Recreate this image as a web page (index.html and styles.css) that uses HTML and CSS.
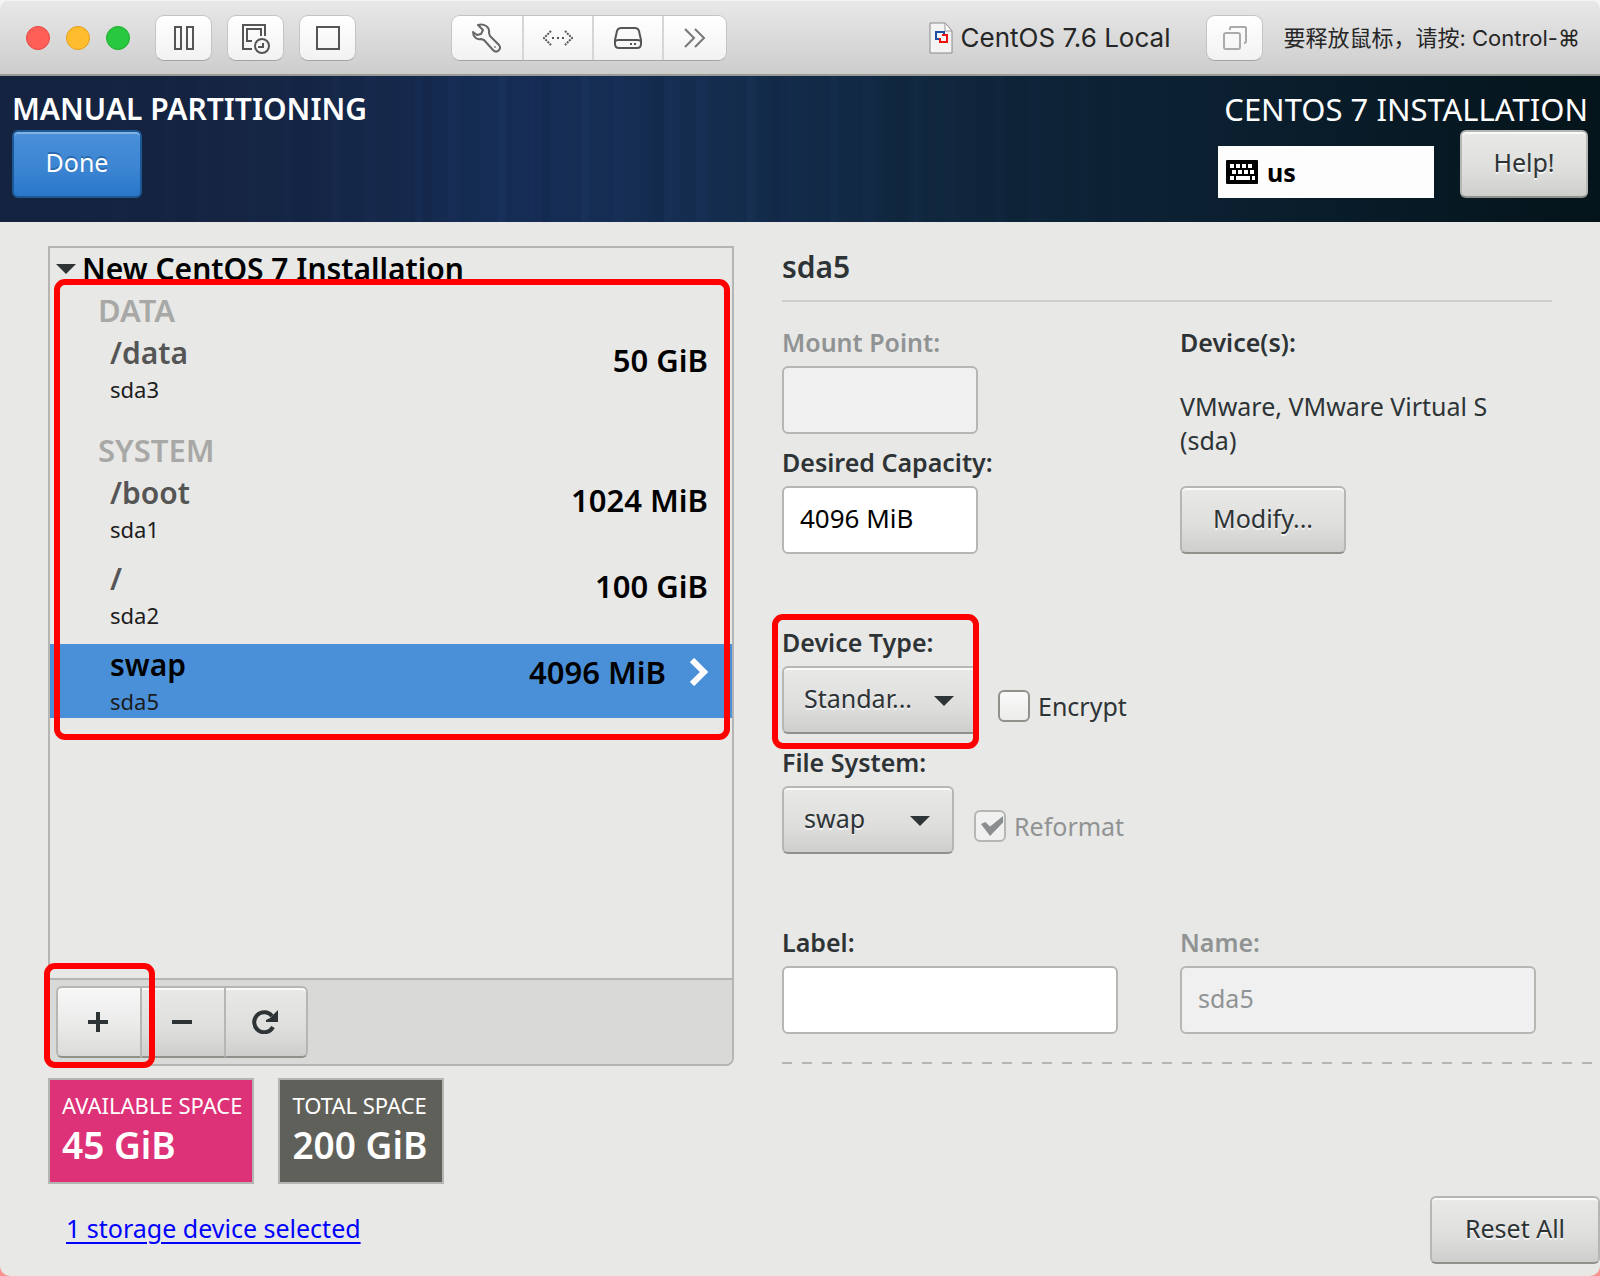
FILE: index.html
```html
<!DOCTYPE html>
<html lang="en">
<head>
<meta charset="utf-8">
<title>CentOS 7.6 Local</title>
<link rel="stylesheet" href="styles.css">
</head>
<body>
<div class="window">
  <div class="titlebar">
    <div class="lights">
      <span class="light light-close"></span>
      <span class="light light-min"></span>
      <span class="light light-max"></span>
    </div>
    <div class="tools">
      <button class="tool" aria-label="Pause">
        <svg width="22" height="26" viewBox="0 0 22 26" fill="none" stroke="#555" stroke-width="2"><path d="M2 2h6v22H2zM14 2h6v22h-6z"/></svg>
      </button>
      <button class="tool" aria-label="Snapshots">
        <svg width="30" height="32" viewBox="0 0 30 32" fill="none" stroke="#555" stroke-width="2"><path d="M11 27H2V3h22v11"/><path d="M11 19H6V7h14v7"/><circle cx="21" cy="24" r="7"/><path d="M17 25h5v-4"/></svg>
      </button>
      <button class="tool" aria-label="Full screen">
        <svg width="26" height="26" viewBox="0 0 26 26" fill="none" stroke="#555" stroke-width="2"><path d="M2 2h22v22H2z"/></svg>
      </button>
    </div>
    <div class="tool-group">
      <button class="seg" aria-label="Settings">
        <svg width="30" height="30" viewBox="0 0 30 30" fill="none" stroke="#666" stroke-width="2" stroke-linejoin="round"><path d="M6 2c6-2 12 2 11 8l1 3 9 9c3 4-2 9-6 5l-9-10-3-1C5 17 1 14 1 9l4 3 4-1 2-4z"/><circle cx="23" cy="24" r="1" fill="#888" stroke="none"/></svg>
      </button>
      <button class="seg" aria-label="Network">
        <svg width="30" height="16" viewBox="0 0 30 16" fill="none" stroke="#555" stroke-width="2" stroke-dasharray="2 1"><path d="M8 1L1 8l7 7M22 1l7 7-7 7"/><path d="M9 8h2M14 8h2M19 8h2" stroke-dasharray="none"/></svg>
      </button>
      <button class="seg" aria-label="Hard disk">
        <svg width="30" height="24" viewBox="0 0 30 24" fill="none" stroke="#555" stroke-width="2" stroke-linejoin="round"><path d="M8 2h14q3 0 4 3l2 9v4q0 4-4 4H6q-4 0-4-4v-4l2-9q1-3 4-3z"/><path d="M2 16q0-2 4-2h18q4 0 4 2M17 18h2M21 18h2"/></svg>
      </button>
      <button class="seg" aria-label="More">
        <svg width="22" height="20" viewBox="0 0 22 20" fill="none" stroke="#777" stroke-width="2"><path d="M1 1l9 9-9 9M11 1l9 9-9 9"/></svg>
      </button>
    </div>
    <div class="doc-title">
      <svg width="24" height="32" viewBox="0 0 24 32" fill="none"><path d="M1 1h15l7 8v22H1z" fill="#f4f4f4" stroke="#8a8a8a"/><path d="M16 1v8h7z" fill="#fff" stroke="#999"/><path d="M10 17H7v-7h8v3" stroke="#1c4fa0" stroke-width="2"/><path d="M13 13h5v7h-7v-4" stroke="#e11" stroke-width="2"/></svg>
      <span>CentOS 7.6 Local</span>
    </div>
    <button class="tool" aria-label="Release">
      <svg width="26" height="26" viewBox="0 0 26 26" fill="none" stroke="#aaa" stroke-width="2"><rect x="2" y="8" width="16" height="16" rx="2"/><path d="M8 5V3q0-1 1-1h14q1 0 1 1v13q0 2-2 2"/></svg>
    </button>
    <span class="hint" lang="zh">要释放鼠标，请按: Control-⌘</span>
  </div>

  <header class="banner">
    <div class="banner-left">
      <h1 class="screen-title">MANUAL PARTITIONING</h1>
      <button class="btn btn-primary">Done</button>
    </div>
    <div class="banner-right">
      <div class="product">CENTOS 7 INSTALLATION</div>
      <div class="banner-row">
        <div class="keyboard">
          <svg width="32" height="24" viewBox="0 0 32 24"><rect width="32" height="24" rx="1"/><g fill="#fff"><path d="M4 4h4v4H4zM10 4h4v4h-4zM16 4h4v4h-4zM22 4h4v4h-4zM6 10h4v4H6zM12 10h4v4h-4zM18 10h4v4h-4zM24 10h4v4h-4zM4 16h4v4H4zM10 16h14v4H10zM26 16h3v4h-3z"/></g></svg>
          <span>us</span>
        </div>
        <button class="btn btn-help">Help!</button>
      </div>
    </div>
  </header>

  <main class="content">
    <section class="mounts">
      <div class="mount-list">
        <h2 class="root"><span class="caret"></span>New CentOS 7 Installation</h2>
        <div class="groups">
          <h3 class="group">DATA</h3>
          <ul class="rows">
            <li class="row"><div><div class="name">/data</div><div class="dev">sda3</div></div><div class="size">50 GiB</div></li>
          </ul>
          <h3 class="group group-next">SYSTEM</h3>
          <ul class="rows">
            <li class="row"><div><div class="name">/boot</div><div class="dev">sda1</div></div><div class="size">1024 MiB</div></li>
            <li class="row"><div><div class="name">/</div><div class="dev">sda2</div></div><div class="size">100 GiB</div></li>
            <li class="row selected"><div><div class="name">swap</div><div class="dev">sda5</div></div><div class="size">4096 MiB<svg width="18" height="28" viewBox="0 0 18 28" fill="none" stroke="#fff" stroke-width="6"><path d="M2 2l12 12L2 26"/></svg></div></li>
          </ul>
          <span class="mark mark-list"></span>
        </div>
      </div>
      <div class="list-bar">
        <button class="bar-btn bar-hot" aria-label="Add"><svg width="20" height="20" viewBox="0 0 20 20" stroke="#2e3436" stroke-width="4"><path d="M0 10h20M10 0v20"/></svg></button>
        <button class="bar-btn" aria-label="Remove"><svg width="20" height="20" viewBox="0 0 20 20" stroke="#2e3436" stroke-width="4"><path d="M0 10h20"/></svg></button>
        <button class="bar-btn" aria-label="Reload"><svg width="26" height="24" viewBox="0 0 26 24" fill="none" stroke="#2e3436" stroke-width="4"><path d="M20 6A10 10 0 1 0 21 17"/><path d="M26 0v12H14v-2l4-2z" fill="#2e3436" stroke="none"/></svg></button>
        <span class="mark mark-add"></span>
      </div>
    </section>

    <form class="details">
      <h2 class="part-title">sda5</h2>
      <div class="field">
        <label class="label muted" for="mount">Mount Point:</label>
        <input class="entry short" id="mount" disabled>
      </div>
      <div class="field span-two">
        <div class="label">Device(s):</div>
        <p class="device">VMware, VMware Virtual S<br>(sda)</p>
        <button type="button" class="btn btn-modify">Modify...</button>
      </div>
      <div class="field">
        <label class="label" for="capacity">Desired Capacity:</label>
        <input class="entry short" id="capacity" value="4096 MiB">
      </div>
      <div class="field wide after-gap">
        <label class="label" for="type">Device Type:</label>
        <div class="line">
          <div class="combo combo-type"><select id="type"><option>Standar...</option></select></div>
          <label class="check"><input type="checkbox">Encrypt</label>
        </div>
        <span class="mark mark-type"></span>
      </div>
      <div class="field wide">
        <label class="label" for="fs">File System:</label>
        <div class="line">
          <div class="combo combo-fs"><select id="fs"><option>swap</option></select></div>
          <label class="check muted"><input type="checkbox" checked disabled>Reformat</label>
        </div>
      </div>
      <div class="field after-gap">
        <label class="label" for="label">Label:</label>
        <input class="entry entry-label" id="label">
      </div>
      <div class="field after-gap">
        <label class="label muted" for="name">Name:</label>
        <input class="entry entry-name" id="name" value="sda5" disabled>
      </div>
      <div class="dashes"></div>
    </form>
  </main>

  <div class="tiles">
    <div class="tile tile-free"><div class="tile-label">AVAILABLE SPACE</div><div class="tile-value">45 GiB</div></div>
    <div class="tile tile-total"><div class="tile-label">TOTAL SPACE</div><div class="tile-value">200 GiB</div></div>
  </div>
  <footer class="bottom">
    <a class="storage" href="#storage">1 storage device selected</a>
    <button class="btn btn-reset">Reset All</button>
  </footer>
</div>
</body>
</html>
```
FILE: styles.css
```css
* { box-sizing: border-box; }
html { background: linear-gradient(#f4f4f4 50%, #ff9090 50%); }
body {
  margin: 0;
  font: 25px/34px "Noto Sans", "Open Sans", sans-serif;
  color: #2e3436;
}
h1, h2, h3, p, ul { margin: 0; padding: 0; font-size: inherit; }
ul { list-style: none; }
button, input, select { font: inherit; color: inherit; margin: 0; }
svg { display: block; flex: none; }

.window {
  min-height: 100vh;
  display: flex;
  flex-direction: column;
  background: #e8e8e6;
  border-radius: 10px;
  overflow: hidden;
}

/* Host window title bar */
.titlebar {
  height: 76px;
  display: flex;
  align-items: center;
  padding: 0 20px 0 26px;
  background: linear-gradient(#e8e8e8, #cdcdcd);
  border-top: 1px solid #f4f4f4;
  border-bottom: 2px solid #9b9b96;
  font-family: Inter, "Noto Sans CJK SC", sans-serif;
  color: #262626;
}
.lights { display: flex; gap: 16px; margin-right: 25px; }
.light { width: 24px; height: 24px; border-radius: 50%; border: 1px solid; }
.light-close { background: #ff5f57; border-color: #e2463f; }
.light-min { background: #ffbd2e; border-color: #e0a01f; }
.light-max { background: #28c940; border-color: #1dad2b; }
.tools { display: flex; gap: 15px; margin-right: 95px; }
.tool, .seg {
  display: flex;
  align-items: center;
  justify-content: center;
  padding: 0;
  border: 0;
  background: linear-gradient(#fff, #f2f2f2);
}
.tool, .tool-group {
  height: 46px;
  border: 1px solid #c4c4c4;
  border-bottom-color: #a4a4a4;
  border-radius: 9px;
}
.tool { width: 57px; }
.tool-group { display: flex; overflow: hidden; }
.seg { width: 70px; }
.seg + .seg { border-left: 2px solid #d6d6d6; }
.seg:last-child { width: 64px; }
.doc-title { display: flex; align-items: center; gap: 8px; margin: 0 36px 0 auto; font-size: 26px; line-height: 38px; white-space: nowrap; }
.hint { margin-left: 20px; font-size: 22px; white-space: nowrap; }

/* Installer banner */
.banner {
  height: 146px;
  display: flex;
  justify-content: space-between;
  padding: 12px 12px 0;
  color: #fff;
  background:
    linear-gradient(90deg, #14233f 5%, transparent 30%, transparent 45%, #0b2031 75%, #04141a 100%),
    repeating-linear-gradient(90deg, rgba(60, 100, 170, .07) 0 6px, transparent 10px 31px, rgba(60, 60, 140, .08) 33px 43px, transparent 45px 83px),
    repeating-linear-gradient(90deg, transparent 0 50px, rgba(8, 20, 50, .12) 60px 74px, transparent 76px 119px),
    linear-gradient(90deg, #13223d 0, #15284a 20%, #152d55 32%, #142d4c 50%, #10283e 75%, #06161d 100%);
}
.screen-title { font-size: 30px; line-height: 42px; font-weight: 600; white-space: nowrap; }
.product { font-size: 31px; line-height: 42px; white-space: nowrap; }
.banner-right { display: flex; flex-direction: column; align-items: flex-end; }
.banner-row { display: flex; align-items: flex-end; gap: 26px; }
.keyboard {
  width: 216px;
  height: 52px;
  display: flex;
  align-items: center;
  gap: 9px;
  padding-left: 8px;
  background: #fdfdfd;
  color: #000;
  font-weight: 700;
}

.btn, .combo select {
  height: 68px;
  border: 2px solid #b6b6b3;
  border-bottom-color: #91918c;
  border-radius: 6px;
  background: linear-gradient(#e9e9e8, #dededc 60%, #cececc);
  box-shadow: inset 0 2px #fafafa;
  text-shadow: 0 2px #f4f4f4;
  color: #2e3436;
  white-space: nowrap;
}
.btn { display: block; padding: 0 0 4px; }
.btn-primary {
  width: 130px;
  color: #fff;
  border-color: #1c5796;
  background: linear-gradient(#4a90d9, #3a84d2 60%, #2a76c8);
  box-shadow: inset 0 2px #82b3e8;
  text-shadow: 0 -2px #2a69ad;
}
.btn-help { width: 128px; }
.btn-modify { width: 166px; }
.btn-reset { width: 170px; }

/* Two-pane content */
.content {
  flex: 1;
  display: grid;
  grid-template-columns: minmax(0, 686fr) minmax(0, 818fr);
  column-gap: 48px;
  padding: 24px 0 0 48px;
}
.mounts {
  display: flex;
  flex-direction: column;
  border: 2px solid #b5b5b3;
  border-radius: 0 0 8px 8px;
}
.mount-list { flex: 1; }
.root { display: flex; align-items: center; gap: 6px; height: 42px; padding-left: 6px; font-size: 30px; font-weight: 600; color: #000; }
.caret { width: 20px; height: 10px; background: #2e3436; clip-path: polygon(0 0, 100% 0, 50% 100%); }
.groups { position: relative; }
.group { padding-left: 48px; font-size: 31px; line-height: 40px; padding-bottom: 2px; font-weight: 600; color: #a8a8a7; }
.group-next { margin-top: 24px; }
.rows { display: flex; flex-direction: column; gap: 12px; }
.row { display: flex; justify-content: space-between; height: 74px; padding: 0 24px 0 60px; color: #000; }
.name { font-size: 30px; line-height: 42px; font-weight: 600; color: #555; }
.dev { font-size: 22px; line-height: 30px; color: #1c1c1c; }
.size { display: flex; align-items: center; gap: 24px; height: 40px; margin-top: 8px; font-size: 31px; font-weight: 600; }
.selected { background: #4a90d9; }
.selected .name { color: #000; }
.list-bar {
  position: relative;
  display: flex;
  height: 86px;
  padding: 6px;
  background: #d9d9d7;
  border-top: 2px solid #b5b5b3;
  border-radius: 0 0 6px 6px;
}
.bar-btn {
  width: 84px;
  height: 72px;
  display: flex;
  align-items: center;
  justify-content: center;
  padding: 0 2px 0 0;
  border: 2px solid #b6b6b3;
  border-left-width: 0;
  border-bottom-color: #91918c;
  background: linear-gradient(#e9e9e8, #dededc 60%, #cececc);
  box-shadow: inset 0 2px #fafafa;
}
.bar-btn:first-child { width: 86px; border-left-width: 2px; border-radius: 6px 0 0 6px; }
.bar-btn:nth-child(3) { width: 82px; border-radius: 0 6px 6px 0; }
.bar-hot { background: linear-gradient(#f8f8f8, #e9e9e8 60%, #dadad8); }

/* Red call-outs drawn over the controls */
.mark { position: absolute; border: 6px solid #f00; border-radius: 11px; pointer-events: none; }
.mark-list { inset: -11px 2px -22px 4px; }
.mark-add { left: -6px; top: -17px; width: 111px; height: 105px; }
.mark-type { left: -10px; top: 0; width: 207px; height: 135px; }

/* Partition details */
.details {
  display: grid;
  grid-template-columns: minmax(0, 398fr) minmax(0, 420fr);
  align-content: start;
}
.part-title {
  grid-column: 1 / -1;
  height: 56px;
  margin-right: 48px;
  margin-bottom: 12px;
  font-size: 30px;
  line-height: 42px;
  font-weight: 600;
  border-bottom: 2px solid #cfcfcd;
}
.field { position: relative; }
.span-two { grid-row: span 2; display: flex; flex-direction: column; }
.wide { grid-column: 1 / -1; }
.after-gap { margin-top: 60px; }
.label { display: block; height: 52px; padding-top: 11px; font-weight: 600; }
.muted { color: #909393; }
.device { height: 100px; margin-bottom: 20px; padding-top: 23px; }
.entry {
  display: block;
  width: 356px;
  height: 68px;
  padding: 0 16px 4px;
  border: 2px solid #b6b6b3;
  border-radius: 6px;
  background: #fff;
  color: #000;
}
.entry:disabled { background: #f0f0f0; color: #909393; }
.short { width: 196px; font-size: 26px; }
.entry-label { width: 336px; }
.line { display: flex; }
.combo { position: relative; }
.combo::after {
  content: "";
  position: absolute;
  right: 24px;
  top: 30px;
  width: 20px;
  height: 10px;
  background: #2e3436;
  clip-path: polygon(0 0, 100% 0, 50% 100%);
}
.combo select { width: 100%; appearance: none; padding: 0 0 4px 20px; }
.combo-type { width: 196px; }
.combo-fs { width: 172px; }
.check { display: flex; align-items: center; gap: 8px; margin: 12px 0 0 20px; height: 56px; }
.check input {
  appearance: none;
  width: 32px;
  height: 32px;
  border: 2px solid #91918c;
  border-radius: 6px;
  background: linear-gradient(#fafafa, #ececea);
}
.check input:disabled { border-color: #b6b6b3; background: #f0f0f0; }
.check input:checked::before {
  content: "";
  display: block;
  width: 24px;
  height: 20px;
  margin: 4px;
  background: #8b8e8f;
  clip-path: polygon(4% 40%, 22% 30%, 42% 52%, 96% 0, 96% 32%, 42% 100%);
}
.dashes {
  grid-column: 1 / -1;
  height: 2px;
  margin: 28px 8px 0 0;
  background: repeating-linear-gradient(90deg, #b5b5b3 0 10px, transparent 10px 20px);
}

/* Space summary */
.tiles { display: flex; gap: 24px; padding: 12px 48px 0; }
.tile { height: 106px; padding: 8px 10px 8px 12px; border: 2px solid #b5b5b3; color: #fff; }
.tile-free { min-width: 206px; background: #dd3178; }
.tile-total { min-width: 166px; background: #60605a; }
.tile-label { font-size: 22px; line-height: 34px; white-space: nowrap; }
.tile-value { font-size: 37px; line-height: 46px; font-weight: 600; }
.bottom { display: flex; justify-content: space-between; align-items: flex-start; padding: 12px 0 12px 66px; }
.storage { margin-top: 15px; color: #00f; text-decoration-thickness: 2px; text-underline-offset: 4px; }
```
